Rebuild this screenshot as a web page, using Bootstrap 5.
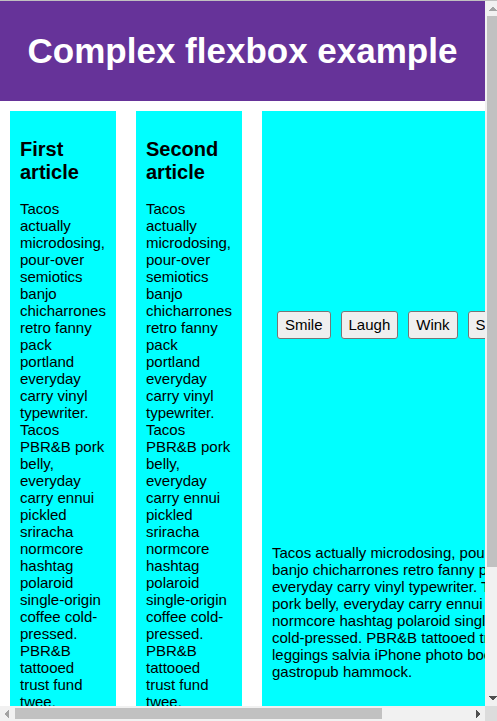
<!DOCTYPE html>
<html lang="en">
<head>
<meta charset="utf-8">
<meta name="viewport" content="width=device-width, initial-scale=1">
<title>Complex flexbox example</title>
<link href="https://cdn.jsdelivr.net/npm/bootstrap@5.3.0/dist/css/bootstrap.min.css" rel="stylesheet">
<style>
body { font-family: "Liberation Sans", Arial, sans-serif; font-size: 15px; line-height: 17px; color: #000; background: #fff; }
.frame { display: grid; grid-template-columns: minmax(0, 1fr) 12px; grid-template-rows: minmax(0, 1fr) 15px; border-top: 1px solid #c0c0c0; }
.page-header { background: #663399; color: #fff; height: 100px; }
.page-header h1 { font-size: 35px; line-height: 40px; }
.articles { padding: 10px; gap: 20px; }
.story { background: #00ffff; padding: 10px; }
.story-narrow { flex: 0 0 106px; }
.story-wide { flex: 0 0 350px; }
.story h2 { font-size: 20px; line-height: 23px; margin: 17px 0 16px; }
.moods { min-height: 408px; gap: 10px; padding: 0 5px; }
.moods .btn { --bs-btn-font-size: 15px; --bs-btn-line-height: 18px; --bs-btn-padding-x: 7px; --bs-btn-padding-y: 4px; --bs-btn-border-radius: 3px; --bs-btn-bg: #efefef; --bs-btn-border-color: #767676; --bs-btn-color: #000; --bs-btn-hover-bg: #e5e5e5; --bs-btn-hover-color: #000; }
.copy { margin: 15px 0; }
.track { background: #f1f1f1; }
.track svg { display: block; flex: none; }
.thumb { background: #c1c1c1; }
.track-y .thumb { margin-left: 2px; flex: 552 1 0; }
.track-x .thumb { margin: 2px 0; flex: 367 1 0; }
.track-y .rest { flex: 124 1 0; }
.track-x .rest { flex: 88 1 0; }
.corner { background: #dcdcdc; }
</style>
<script src="https://cdn.jsdelivr.net/npm/bootstrap@5.3.0/dist/js/bootstrap.bundle.min.js"></script>
</head>
<body>
<div class="frame vh-100 overflow-hidden">
  <main class="overflow-hidden">
    <header class="page-header d-flex align-items-center justify-content-center">
      <h1 class="m-0 fw-bold text-nowrap">Complex flexbox example</h1>
    </header>
    <section class="articles d-flex">
      <article class="story story-narrow">
        <h2 class="fw-bold">First article</h2>
        <p class="copy">Tacos actually microdosing, pour-over semiotics banjo chicharrones retro fanny pack portland everyday carry vinyl typewriter. Tacos PBR&amp;B pork belly, everyday carry ennui pickled sriracha normcore hashtag polaroid single-origin coffee cold-pressed. PBR&amp;B tattooed trust fund twee, leggings salvia iPhone photo booth health goth gastropub hammock.</p>
      </article>
      <article class="story story-narrow">
        <h2 class="fw-bold">Second article</h2>
        <p class="copy">Tacos actually microdosing, pour-over semiotics banjo chicharrones retro fanny pack portland everyday carry vinyl typewriter. Tacos PBR&amp;B pork belly, everyday carry ennui pickled sriracha normcore hashtag polaroid single-origin coffee cold-pressed. PBR&amp;B tattooed trust fund twee, leggings salvia iPhone photo booth health goth gastropub hammock.</p>
      </article>
      <article class="story story-wide">
        <div class="moods d-flex align-items-center">
          <button type="button" class="btn">Smile</button>
          <button type="button" class="btn">Laugh</button>
          <button type="button" class="btn">Wink</button>
          <button type="button" class="btn">Shrug</button>
          <button type="button" class="btn">Blush</button>
        </div>
        <p class="copy">Tacos actually microdosing, pour-over semiotics banjo chicharrones retro fanny pack portland everyday carry vinyl typewriter. Tacos PBR&amp;B pork belly, everyday carry ennui pickled sriracha normcore hashtag polaroid single-origin coffee cold-pressed. PBR&amp;B tattooed trust fund twee, leggings salvia iPhone photo booth health goth gastropub hammock.</p>
      </article>
    </section>
  </main>
  <div class="track track-y d-flex flex-column" aria-hidden="true">
    <svg width="12" height="15" shape-rendering="crispEdges" fill="#a3a3a3"><path d="M7 6h2v1h1v1h1v1h1v1H4V9h1V8h1V7h1z"/></svg>
    <div class="thumb"></div>
    <div class="rest"></div>
    <svg width="12" height="15" shape-rendering="crispEdges" fill="#505050"><path d="M4 5h8v1h-1v1h-1v1H9v1H7V8H6V7H5V6H4z"/></svg>
  </div>
  <div class="track track-x d-flex" aria-hidden="true">
    <svg width="15" height="15" shape-rendering="crispEdges" fill="#a3a3a3"><path d="M9 4v8H8v-1H7v-1H6V9H5V7h1V6h1V5h1V4z"/></svg>
    <div class="thumb"></div>
    <div class="rest"></div>
    <svg width="15" height="15" shape-rendering="crispEdges" fill="#505050"><path d="M6 4h1v1h1v1h1v1h1v2H9v1H8v1H7v1H6z"/></svg>
  </div>
  <div class="corner"></div>
</div>
</body>
</html>
